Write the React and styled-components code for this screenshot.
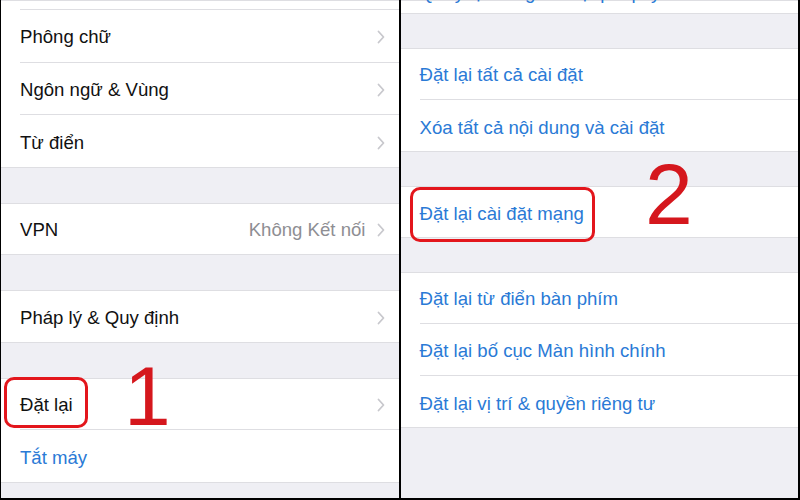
import React from 'react'
import styled, { createGlobalStyle } from 'styled-components'

const GlobalStyle = createGlobalStyle`
  body {
    margin: 0;
    font-family: "Liberation Sans", Arial, sans-serif;
  }
`

const Frame = styled.div`
  position: relative;
  width: 800px;
  height: 500px;
  box-sizing: border-box;
  padding: 0 2px 2px 1px;
  background: #000;
  display: flex;
  gap: 2px;
  overflow: hidden;
`

const Panel = styled.div`
  flex: 1;
  background: #efeff4;
  display: flex;
  flex-direction: column;
  overflow: hidden;
`

const Group = styled.div`
  background: #fff;
  margin-top: ${p => p.$gap || 0}px;
  box-shadow: inset 0 1px #dedee2, inset 0 -1px #dedee2;
`

const Row = styled.div`
  height: ${p => p.$h}px;
  padding-left: 19px;
  display: flex;
  overflow: hidden;
`

const Body = styled.div`
  flex: 1;
  box-sizing: border-box;
  display: flex;
  align-items: ${p => (p.$clip ? 'flex-start' : 'center')};
  justify-content: space-between;
  padding-right: 14px;
  padding-top: ${p => (p.$clip ? '0' : '3px')};
  border-bottom: ${p => (p.$last ? 'none' : '1px solid #dedee2')};
`

const Label = styled.span`
  font-size: 18.6px;
  line-height: 26px;
  color: ${p => (p.$blue ? '#2a7ad6' : '#111')};
  margin-top: ${p => (p.$clip ? '-20px' : '0')};
  white-space: nowrap;
`

const Trail = styled.div`
  display: flex;
  align-items: center;
  gap: 11px;
`

const Value = styled.span`
  font-size: 18.6px;
  color: #8e8e93;
`

const Highlight = styled.div`
  position: absolute;
  left: ${p => p.$x}px;
  top: ${p => p.$y}px;
  width: ${p => p.$w}px;
  height: ${p => p.$h}px;
  box-sizing: border-box;
  border: 3px solid #e3161c;
  border-radius: 10px;
`

const StepNo = styled.div`
  position: absolute;
  left: ${p => p.$x}px;
  top: ${p => p.$y}px;
  font-family: "Liberation Sans", Arial, sans-serif;
  font-size: ${p => p.$size}px;
  line-height: 1;
  color: #d5171d;
`

const Chevron = () => (
  <svg width="8" height="14" viewBox="0 0 8 14">
    <polyline points="1.5,1.5 6.5,7 1.5,12.5" fill="none" stroke="#c8c8cd" strokeWidth="1.8" strokeLinecap="round" strokeLinejoin="round" />
  </svg>
)

function SettingsRow({ label, value, blue, chevron, last, h, clip }) {
  return (
    <Row $h={h}>
      <Body $last={last} $clip={clip}>
        <Label $blue={blue} $clip={clip}>{label}</Label>
        {chevron && (
          <Trail>
            {value && <Value>{value}</Value>}
            <Chevron />
          </Trail>
        )}
      </Body>
    </Row>
  )
}

export default function App() {
  const H = 52.5
  const R = 52
  return (
    <>
      <GlobalStyle />
      <Frame>
        <Panel>
          <Group>
            <SettingsRow h={10} label="" />
            <SettingsRow h={H} label="Phông chữ" chevron />
            <SettingsRow h={H} label="Ngôn ngữ & Vùng" chevron />
            <SettingsRow h={H} label="Từ điển" chevron last />
          </Group>
          <Group $gap={35}>
            <SettingsRow h={H} label="VPN" value="Không Kết nối" chevron last />
          </Group>
          <Group $gap={35}>
            <SettingsRow h={H} label="Pháp lý & Quy định" chevron last />
          </Group>
          <Group $gap={35}>
            <SettingsRow h={H} label="Đặt lại" chevron />
            <SettingsRow h={H} label="Tắt máy" blue last />
          </Group>
        </Panel>

        <Panel>
          <Group>
            <SettingsRow h={14} label="Quay lại trang cài đặt pháp lý" blue clip last />
          </Group>
          <Group $gap={34}>
            <SettingsRow h={R} label="Đặt lại tất cả cài đặt" blue />
            <SettingsRow h={R} label="Xóa tất cả nội dung và cài đặt" blue last />
          </Group>
          <Group $gap={34}>
            <SettingsRow h={R} label="Đặt lại cài đặt mạng" blue last />
          </Group>
          <Group $gap={34}>
            <SettingsRow h={R} label="Đặt lại từ điển bàn phím" blue />
            <SettingsRow h={R} label="Đặt lại bố cục Màn hình chính" blue />
            <SettingsRow h={R} label="Đặt lại vị trí & quyền riêng tư" blue last />
          </Group>
        </Panel>

        <Highlight $x={4} $y={377} $w={84} $h={51} />
        <Highlight $x={410} $y={187} $w={185} $h={55} />
        <StepNo $x={124} $y={354} $size={84}>1</StepNo>
        <StepNo $x={645} $y={151} $size={86}>2</StepNo>
      </Frame>
    </>
  )
}
